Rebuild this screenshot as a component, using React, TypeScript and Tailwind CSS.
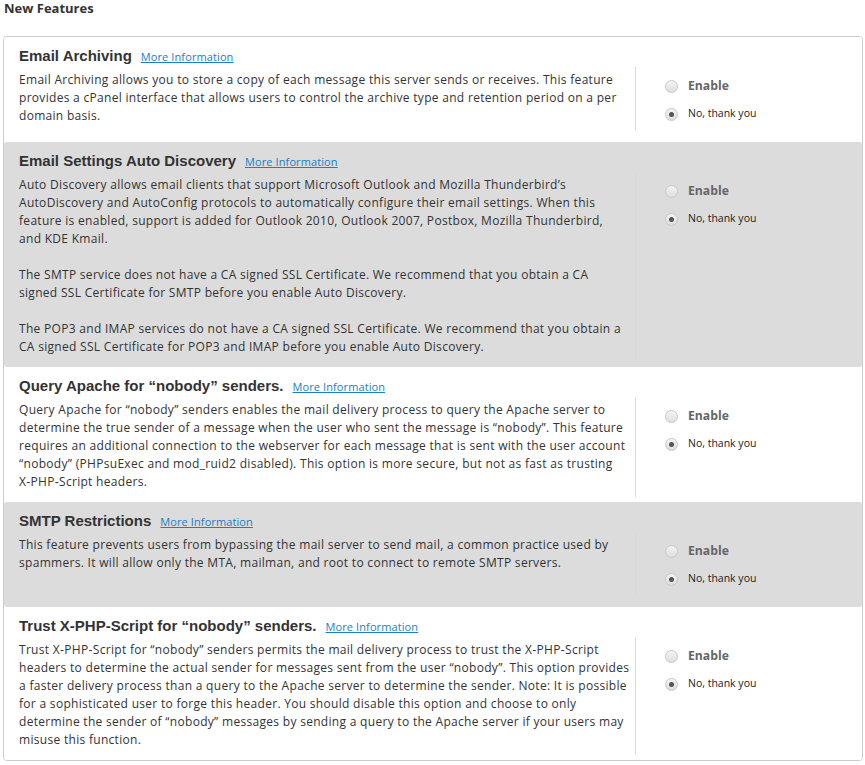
import React from 'react';

interface Feature {
  title: string;
  paragraphs: string[];
  gray?: boolean;
  short?: boolean;
  wide?: boolean;
}

const features: Feature[] = [
  {
    title: 'Email Archiving',
    paragraphs: [
      'Email Archiving allows you to store a copy of each message this server sends or receives. This feature provides a cPanel interface that allows users to control the archive type and retention period on a per domain basis.',
    ],
    short: true,
  },
  {
    title: 'Email Settings Auto Discovery',
    gray: true,
    paragraphs: [
      'Auto Discovery allows email clients that support Microsoft Outlook and Mozilla Thunderbird’s AutoDiscovery and AutoConfig protocols to automatically configure their email settings. When this feature is enabled, support is added for Outlook 2010, Outlook 2007, Postbox, Mozilla Thunderbird, and KDE Kmail.',
      'The SMTP service does not have a CA signed SSL Certificate. We recommend that you obtain a CA signed SSL Certificate for SMTP before you enable Auto Discovery.',
      'The POP3 and IMAP services do not have a CA signed SSL Certificate. We recommend that you obtain a CA signed SSL Certificate for POP3 and IMAP before you enable Auto Discovery.',
    ],
  },
  {
    title: 'Query Apache for “nobody” senders.',
    paragraphs: [
      'Query Apache for “nobody” senders enables the mail delivery process to query the Apache server to determine the true sender of a message when the user who sent the message is “nobody”. This feature requires an additional connection to the webserver for each message that is sent with the user account “nobody” (PHPsuExec and mod_ruid2 disabled). This option is more secure, but not as fast as trusting X\u2011PHP\u2011Script headers.',
    ],
  },
  {
    title: 'SMTP Restrictions',
    gray: true,
    short: true,
    paragraphs: [
      'This feature prevents users from bypassing the mail server to send mail, a common practice used by spammers. It will allow only the MTA, mailman, and root to connect to remote SMTP servers.',
    ],
  },
  {
    title: 'Trust X-PHP-Script for “nobody” senders.',
    wide: true,
    paragraphs: [
      'Trust X\u2011PHP\u2011Script for “nobody” senders permits the mail delivery process to trust the X\u2011PHP\u2011Script headers to determine the actual sender for messages sent from the user “nobody”. This option provides a faster delivery process than a query to the Apache server to determine the sender. Note: It is possible for a sophisticated user to forge this header. You should disable this option and choose to only determine the sender of “nobody” messages by sending a query to the Apache server if your users may misuse this function.',
    ],
  },
];

function Radio({ checked }: { checked: boolean }) {
  return (
    <span className="w-[13px] h-[13px] rounded-full border border-[#c8c8c8] bg-gradient-to-b from-[#f4f4f4] to-[#dedede] flex items-center justify-center shrink-0">
      {checked && <span className="w-[5px] h-[5px] rounded-full bg-[#555]" />}
    </span>
  );
}

function FeatureRow({ feature }: { feature: Feature }) {
  return (
    <div
      className={`pl-[15px] pt-2 ${feature.short ? 'pb-[11px]' : 'pb-[5px]'} ${
        feature.gray ? 'bg-[#dcdcdc] rounded-[3px]' : 'bg-white'
      }`}
    >
      <div className="flex items-baseline h-[22px]">
        <span className="text-[15px] leading-[22px] font-bold text-[#333] font-['Liberation_Sans',Arial,sans-serif]">
          {feature.title}
        </span>
        <a href="#" className="ml-[9px] text-[11px] tracking-[0.1px] text-[#1a7ec8] underline">
          More Information
        </a>
      </div>
      <div className="flex">
        <div
          className={`flex-1 pt-1 pb-1.5 ${
            feature.wide ? 'pr-[2px]' : 'pr-[7px]'
          } text-[12px] leading-[18px] tracking-[0.3px] text-[#333] space-y-[18px]`}
        >
          {feature.paragraphs.map((p, i) => (
            <p key={i}>{p}</p>
          ))}
        </div>
        <div className="w-[227px] shrink-0 border-l border-[#d8d8d8] pl-[29px] pt-[11px] pb-2 min-h-[64px]">
          <label className="flex items-center gap-[10px] h-[16px]">
            <Radio checked={false} />
            <span className="text-[12.2px] font-bold text-[#666]">Enable</span>
          </label>
          <label className="flex items-center gap-[10px] h-[16px] mt-[12px]">
            <Radio checked={true} />
            <span className="text-[10.5px] text-[#222]">No, thank you</span>
          </label>
        </div>
      </div>
    </div>
  );
}

export default function App() {
  return (
    <div className="min-h-screen bg-white font-['Open_Sans',sans-serif] pb-2">
      <h1 className="pt-[1px] text-[13px] leading-[15px] font-bold text-[#333] pl-[4px] mb-[20px]">New Features</h1>
      <div className="ml-[3px] w-[860px] border border-[#cccccc] rounded-[4px] overflow-hidden">
        {features.map((f) => (
          <FeatureRow key={f.title} feature={f} />
        ))}
      </div>
    </div>
  );
}
